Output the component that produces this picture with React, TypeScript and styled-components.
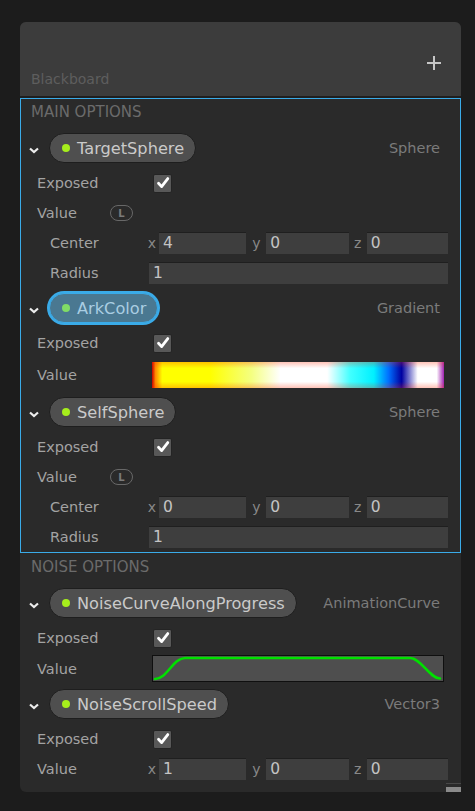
import React from "react";
import styled, { createGlobalStyle } from "styled-components";

const GlobalStyle = createGlobalStyle`
  html, body { margin: 0; padding: 0; background: #1c1c1c; }
  body { font-family: "DejaVu Sans", "Liberation Sans", sans-serif; }
  * { box-sizing: border-box; }
`;

const Page = styled.div`
  padding: 22px 14px 20px 20px;
`;

const Panel = styled.div`
  position: relative;
  width: 441px;
  background: #2a2a2a;
  border-radius: 6px;
  padding-bottom: 7px;
`;

const Header = styled.div`
  height: 76px;
  background: #3c3c3c;
  border-radius: 6px 6px 0 0;
  border-bottom: 2px solid #1f1f1f;
  display: flex;
  justify-content: space-between;
  padding: 0 19px 0 11px;
`;

const HeaderTitle = styled.div`
  align-self: flex-end;
  margin-bottom: 9px;
  font-size: 14px;
  color: #5e5e5e;
`;

const AddButton = styled.div`
  margin-top: 33px;
  width: 16px;
  height: 16px;
  color: #c6c6c6;
  display: flex;
`;

const Section = styled.div<{ $selected?: boolean }>`
  border: 1px solid ${(p) => (p.$selected ? "#3aabe8" : "transparent")};
`;

const SectionTitle = styled.div`
  height: 31px;
  line-height: 27px;
  padding-left: 10px;
  font-size: 15px;
  color: #6b6b6b;
  text-transform: uppercase;
`;

const Block = styled.div`
  & + & {
    margin-top: 2px;
  }
`;

const PillRow = styled.div`
  height: 36px;
  margin-bottom: 2px;
  display: flex;
  align-items: center;
`;

const Chevron = styled.div`
  width: 26px;
  display: flex;
  justify-content: center;
  margin-top: 4px;
`;

const Pill = styled.div<{ $selected?: boolean }>`
  margin-left: 2px;
  height: 30px;
  display: flex;
  align-items: center;
  gap: 7px;
  padding: 0 11px 0 12px;
  border-radius: 15px;
  background: ${(p) => (p.$selected ? "#4a7891" : "#4f4f4f")};
  border: 1px solid ${(p) => (p.$selected ? "#3aabe8" : "#1e1e1e")};
  box-shadow: ${(p) => (p.$selected ? "0 0 0 2px #3aabe8" : "none")};
  color: ${(p) => (p.$selected ? "#a9cde2" : "#cacaca")};
  font-size: 16.2px;
  white-space: nowrap;
`;

const Dot = styled.span<{ $selected?: boolean }>`
  width: 8px;
  height: 8px;
  border-radius: 50%;
  background: ${(p) => (p.$selected ? "#80dc66" : "#a6ee1c")};
`;

const TypeLabel = styled.div`
  margin-left: auto;
  padding-right: 20px;
  font-size: 14.5px;
  color: #7b7b7b;
`;

const Row = styled.div<{ $h?: number }>`
  height: ${(p) => p.$h ?? 30}px;
  display: grid;
  grid-template-columns: 124px 1fr;
  align-items: center;
  padding-right: 12px;
`;

const LabelCell = styled.div<{ $indent?: boolean }>`
  display: flex;
  align-items: center;
  padding-left: ${(p) => (p.$indent ? 29 : 16)}px;
  font-size: 14.5px;
  color: #a3a3a3;
`;

const LinkBadge = styled.span`
  margin-left: auto;
  margin-right: 12px;
  width: 23px;
  height: 16px;
  border: 1.5px solid #686868;
  border-radius: 8px;
  font-size: 10px;
  font-weight: bold;
  color: #7a7a7a;
  display: flex;
  align-items: center;
  justify-content: center;
`;

const CheckBox = styled.div`
  margin-left: 8px;
  width: 19px;
  height: 19px;
  border-radius: 2px;
  background: #585858;
  border: 1px solid #242424;
  display: flex;
  align-items: center;
  justify-content: center;
`;

const Vector = styled.div`
  display: grid;
  grid-template-columns: 14px 87fr 20px 82fr 18px 81fr;
  align-items: center;
`;

const Axis = styled.span`
  text-align: center;
  font-size: 14px;
  color: #888888;
`;

const Field = styled.div<{ $offset?: number }>`
  margin-left: ${(p) => p.$offset ?? 0}px;
  height: 22px;
  line-height: 21px;
  background: #3e3e3e;
  border-top: 1px solid #1f1f1f;
  padding-left: 4px;
  font-size: 15.5px;
  color: #c4c4c4;
`;

const GradientBar = styled.div`
  margin: 0 4px 0 7px;
  height: 26px;
  background:
    linear-gradient(to bottom, rgba(255, 40, 0, 0.28) 0%, rgba(255, 40, 0, 0) 24%, rgba(255, 40, 0, 0) 76%, rgba(255, 40, 0, 0.28) 100%),
    linear-gradient(
      to right,
      #c80000 0%,
      #ff8a00 1.2%,
      #ffff00 3.5%,
      #ffff00 20%,
      #f4ff80 34%,
      #ffffff 44%,
      #ffffff 60%,
      #40ffff 68%,
      #00f0ff 76%,
      #0070ff 81%,
      #0000a0 85.5%,
      #ffffff 91%,
      #ffffff 97.5%,
      #a020b0 100%
    );
`;

const CurveBox = styled.div`
  margin: 0 4px 0 7px;
  height: 27px;
  background: #4e4e4e;
  border: 1px solid #0f0f0f;
  display: flex;
`;

const ResizeHandle = styled.div`
  position: absolute;
  right: 0;
  bottom: 0;
  width: 15px;
  height: 9px;
  border-top: 1px solid #484848;
  border-bottom: 5px solid #8a8a8a;
`;

const ChevronIcon = () => (
  <svg width="10" height="7" viewBox="0 0 10 7">
    <path d="M1 1.5 L5 5 L9 1.5" fill="none" stroke="#ececec" strokeWidth="2.2" />
  </svg>
);

const CheckIcon = () => (
  <svg width="16" height="16" viewBox="0 0 16 16">
    <path d="M3.5 8.2 L6.6 11.6 L12.8 3.6" fill="none" stroke="#ffffff" strokeWidth="2.8" strokeLinecap="round" strokeLinejoin="round" />
  </svg>
);

const PlusIcon = () => (
  <svg width="16" height="16" viewBox="0 0 16 16">
    <path d="M8 1 V15 M1 8 H15" stroke="currentColor" strokeWidth="2" />
  </svg>
);

const CurveIcon = () => (
  <svg width="289" height="25" viewBox="0 0 289 25">
    <path
      d="M2 23 C 14 23, 20 2, 32 2 L 257 2 C 268 2, 276 22, 287 22.5"
      fill="none"
      stroke="#00e000"
      strokeWidth="2.6"
      strokeLinecap="round"
    />
  </svg>
);

type Prop =
  | { name: string; type: string; selected?: boolean; kind: "sphere"; center: string[]; radius: string }
  | { name: string; type: string; selected?: boolean; kind: "gradient" }
  | { name: string; type: string; selected?: boolean; kind: "curve" }
  | { name: string; type: string; selected?: boolean; kind: "vector"; value: string[] };

const VectorFields = ({ values }: { values: string[] }) => (
  <Vector>
    <Axis>x</Axis>
    <Field>{values[0]}</Field>
    <Axis>y</Axis>
    <Field>{values[1]}</Field>
    <Axis>z</Axis>
    <Field>{values[2]}</Field>
  </Vector>
);

const PropertyBlock = ({ p }: { p: Prop }) => (
  <Block>
    <PillRow>
      <Chevron>
        <ChevronIcon />
      </Chevron>
      <Pill $selected={p.selected}>
        <Dot $selected={p.selected} />
        {p.name}
      </Pill>
      <TypeLabel>{p.type}</TypeLabel>
    </PillRow>
    <Row>
      <LabelCell>Exposed</LabelCell>
      <CheckBox>
        <CheckIcon />
      </CheckBox>
    </Row>
    {p.kind === "sphere" && (
      <>
        <Row>
          <LabelCell>
            Value
            <LinkBadge>L</LinkBadge>
          </LabelCell>
          <span />
        </Row>
        <Row>
          <LabelCell $indent>Center</LabelCell>
          <VectorFields values={p.center} />
        </Row>
        <Row>
          <LabelCell $indent>Radius</LabelCell>
          <Field $offset={4}>{p.radius}</Field>
        </Row>
      </>
    )}
    {p.kind === "gradient" && (
      <Row $h={34}>
        <LabelCell>Value</LabelCell>
        <GradientBar />
      </Row>
    )}
    {p.kind === "curve" && (
      <Row $h={31}>
        <LabelCell>Value</LabelCell>
        <CurveBox>
          <CurveIcon />
        </CurveBox>
      </Row>
    )}
    {p.kind === "vector" && (
      <Row>
        <LabelCell>Value</LabelCell>
        <VectorFields values={p.value} />
      </Row>
    )}
  </Block>
);

const mainProps: Prop[] = [
  { name: "TargetSphere", type: "Sphere", kind: "sphere", center: ["4", "0", "0"], radius: "1" },
  { name: "ArkColor", type: "Gradient", kind: "gradient", selected: true },
  { name: "SelfSphere", type: "Sphere", kind: "sphere", center: ["0", "0", "0"], radius: "1" },
];

const noiseProps: Prop[] = [
  { name: "NoiseCurveAlongProgress", type: "AnimationCurve", kind: "curve" },
  { name: "NoiseScrollSpeed", type: "Vector3", kind: "vector", value: ["1", "0", "0"] },
];

export default function App() {
  return (
    <>
      <GlobalStyle />
      <Page>
        <Panel>
          <Header>
            <HeaderTitle>Blackboard</HeaderTitle>
            <AddButton>
              <PlusIcon />
            </AddButton>
          </Header>
          <Section $selected>
            <SectionTitle>Main Options</SectionTitle>
            {mainProps.map((p) => (
              <PropertyBlock key={p.name} p={p} />
            ))}
          </Section>
          <Section>
            <SectionTitle>Noise Options</SectionTitle>
            {noiseProps.map((p) => (
              <PropertyBlock key={p.name} p={p} />
            ))}
          </Section>
          <ResizeHandle />
        </Panel>
      </Page>
    </>
  );
}
